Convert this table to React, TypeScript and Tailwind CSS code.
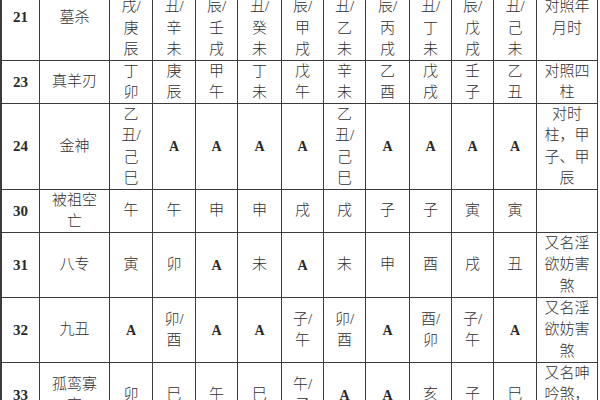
import React from "react";

type Cell = string | string[];

type Row = {
  no: string;
  name: string[];
  cells: Cell[];
  note: string[];
};

const rows: Row[] = [
  {
    no: "21",
    name: ["墓杀"],
    cells: [
      ["甲", "戌/", "庚", "辰"],
      ["乙", "丑/", "辛", "未"],
      ["丙", "辰/", "壬", "戌"],
      ["丁", "丑/", "癸", "未"],
      ["戊", "辰/", "甲", "戌"],
      ["己", "丑/", "乙", "未"],
      ["庚", "辰/", "丙", "戌"],
      ["辛", "丑/", "丁", "未"],
      ["壬", "辰/", "戊", "戌"],
      ["癸", "丑/", "己", "未"],
    ],
    note: ["对照年", "月时"],
  },
  {
    no: "23",
    name: ["真羊刃"],
    cells: [
      ["丁", "卯"],
      ["庚", "辰"],
      ["甲", "午"],
      ["丁", "未"],
      ["戊", "午"],
      ["辛", "未"],
      ["乙", "酉"],
      ["戊", "戌"],
      ["壬", "子"],
      ["乙", "丑"],
    ],
    note: ["对照四", "柱"],
  },
  {
    no: "24",
    name: ["金神"],
    cells: [
      ["乙", "丑/", "己", "巳"],
      "A",
      "A",
      "A",
      "A",
      ["乙", "丑/", "己", "巳"],
      "A",
      "A",
      "A",
      "A",
    ],
    note: ["对时", "柱，甲", "子、甲", "辰"],
  },
  {
    no: "30",
    name: ["被祖空", "亡"],
    cells: [["午"], ["午"], ["申"], ["申"], ["戌"], ["戌"], ["子"], ["子"], ["寅"], ["寅"]],
    note: [],
  },
  {
    no: "31",
    name: ["八专"],
    cells: [["寅"], ["卯"], "A", ["未"], "A", ["未"], ["申"], ["酉"], ["戌"], ["丑"]],
    note: ["又名淫", "欲妨害", "煞"],
  },
  {
    no: "32",
    name: ["九丑"],
    cells: [
      "A",
      ["卯/", "酉"],
      "A",
      "A",
      ["子/", "午"],
      ["卯/", "酉"],
      "A",
      ["酉/", "卯"],
      ["子/", "午"],
      "A",
    ],
    note: ["又名淫", "欲妨害", "煞"],
  },
  {
    no: "33",
    name: ["孤鸾寡", "宿"],
    cells: [["卯"], ["巳"], ["午"], ["巳"], ["午/", "子"], "A", "A", ["亥"], ["子"], ["巳"]],
    note: ["又名呻", "吟煞，", "孤辰"],
  },
];

const cellBase =
  "flex flex-col items-center justify-center text-center border-r border-b border-[#3c3c3c] overflow-hidden";

function Lines({ lines }: { lines: string[] }) {
  return (
    <>
      {lines.map((l, i) => (
        <div key={i} className="leading-[21.5px] whitespace-nowrap">
          {l}
        </div>
      ))}
    </>
  );
}

export default function App() {
  return (
    <div className="w-[600px] h-[400px] overflow-hidden bg-white">
      <div
        className="mt-[-25px] grid grid-cols-[40px_70px_43px_43px_42px_44px_42px_42px_44px_42px_42px_43px_61px] grid-rows-[86px_43px_86px_43px_65px_65px_65px] text-[15px] text-[#303030]"
        style={{ fontFamily: '"Liberation Serif", "Noto Sans CJK SC", serif' }}
      >
        {rows.map((r) => (
          <React.Fragment key={r.no}>
            <div className={`${cellBase} border-l-2 font-bold text-[15px] text-[#2a2a2a]`}>{r.no}</div>
            <div className={`${cellBase} font-light`}>
              <Lines lines={r.name} />
            </div>
            {r.cells.map((c, i) => (
              <div key={i} className={`${cellBase} font-light`}>
                {typeof c === "string" ? (
                  <span className="font-bold text-[14px] text-[#2a2a2a]">{c}</span>
                ) : (
                  <Lines lines={c} />
                )}
              </div>
            ))}
            <div className={`${cellBase} font-light`}>
              <Lines lines={r.note} />
            </div>
          </React.Fragment>
        ))}
      </div>
    </div>
  );
}
